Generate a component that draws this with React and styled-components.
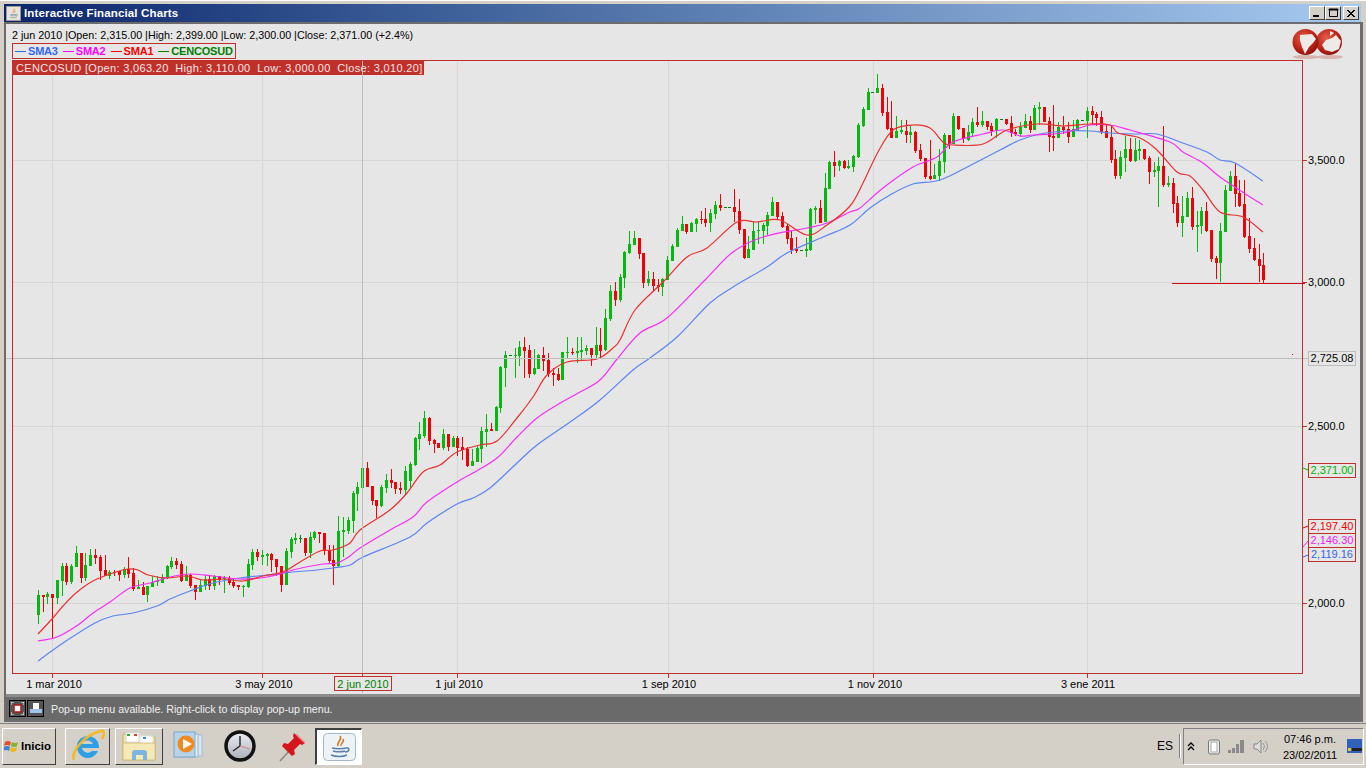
import React from 'react';
import styled, { createGlobalStyle } from 'styled-components';

const GlobalStyle = createGlobalStyle`
	html, body { margin: 0; padding: 0; background: #d4d0c8; overflow: hidden; }
	* { box-sizing: border-box; }
`;

const UI_FONT = '"Liberation Sans", Arial, sans-serif';

const Page = styled.div`
	width: 1366px;
	height: 768px;
	display: flex;
	flex-direction: column;
	background: #d4d0c8;
	font-family: ${UI_FONT};
	overflow: hidden;
`;

const Win = styled.div`
	height: 724px;
	padding: 3px 2px 1px 4px;
	display: flex;
	flex-direction: column;
	border-top: 1px solid #fff;
	border-bottom: 1px solid #808080;
`;

const TitleBar = styled.div`
	height: 18px;
	flex: none;
	margin-right: 3px;
	display: flex;
	align-items: center;
	padding: 0 2px;
	background: linear-gradient(90deg, #0a246a 0%, #3a5c96 30%, #a6caf0 100%);
`;

const TitleIcon = styled.div`
	width: 15px;
	height: 15px;
	background: #e8e4dc;
	border: 1px solid #9a9a9a;
	display: flex;
	align-items: center;
	justify-content: center;
`;

const TitleText = styled.span`
	margin-left: 3px;
	flex: 1;
	color: #fff;
	font-size: 11.5px;
	font-weight: 700;
	letter-spacing: .15px;
`;

const CtrlButtons = styled.div`
	display: flex;
`;

const CtrlButton = styled.div`
	width: 16px;
	height: 14px;
	margin-left: ${props => props.gap ? '2px' : '0'};
	background: #d4d0c8;
	border: 1px solid;
	border-color: #fff #404040 #404040 #fff;
	display: flex;
	align-items: center;
	justify-content: center;
`;

const Panel = styled.div`
	flex: 1;
	margin-right: 1px;
	border: 2px solid #6c6c6c;
	border-right-width: 3px;
	background: #e6e6e6;
	display: flex;
	flex-direction: column;
	position: relative;
	min-height: 0;
`;

const InfoLine = styled.div`
	height: 19px;
	padding: 4px 0 0 6px;
	font-size: 10.75px;
	line-height: 14px;
	color: #000;
	white-space: pre;
`;

const Legend = styled.div`
	align-self: flex-start;
	height: 16px;
	margin-left: 6px;
	padding: 0 2px;
	border: 1px solid #c0302a;
	display: flex;
	align-items: center;
	gap: 5px;
`;

const LegendItem = styled.span`
	display: flex;
	align-items: center;
	gap: 2px;
	color: ${props => props.color};
	font-size: 11px;
	font-weight: 700;
	letter-spacing: -.2px;

	&::before {
		content: '';
		width: 11px;
		height: 1px;
		background: ${props => props.color};
	}
`;

const ChartArea = styled.div`
	position: relative;
	height: 634px;
	margin-top: 1px;
`;

const Banner = styled.div`
	position: absolute;
	left: 6px;
	top: 1px;
	width: 412px;
	height: 14px;
	padding-left: 4px;
	background: #c0302a;
	color: #f4e4e2;
	font-size: 11px;
	line-height: 14px;
	letter-spacing: .32px;
	white-space: pre;
`;

const ChartSvg = styled.svg`
	position: relative;
	display: block;
`;

const Logo = styled.svg`
	position: absolute;
	right: 17px;
	top: 5px;
`;

const StatusBar = styled.div`
	flex: none;
	height: 26px;
	border-top: 3px solid #8c8c8c;
	background: #6a6a6a;
	display: flex;
	align-items: center;
	padding-left: 3px;
	gap: 1px;
`;

const StatusIcon = styled.div`
	width: 17px;
	height: 17px;
	background: #555;
	border: 1px solid #000;
	display: flex;
	align-items: center;
	justify-content: center;
`;

const StatusText = styled.span`
	margin-left: 6px;
	color: #f0f0f0;
	font-size: 10.7px;
`;

const Taskbar = styled.div`
	flex: 1;
	display: flex;
	align-items: center;
	padding: 0 2px;
	background: #d4d0c8;
`;

const StartButton = styled.div`
	width: 54px;
	height: 37px;
	display: flex;
	align-items: center;
	gap: 1px;
	padding-left: 1px;
	border: 1px solid;
	border-color: #fff #404040 #404040 #fff;
	font-size: 11.5px;
	font-weight: 700;
	color: #000;
`;

const TaskIcon = styled.div`
	width: ${props => props.w}px;
	height: 37px;
	margin-left: ${props => props.ml}px;
	display: flex;
	align-items: center;
	justify-content: center;
	border: ${props => props.flat ? '0' : '1px solid'};
	border-color: #fff #404040 #404040 #fff;
`;

const ActiveTask = styled(TaskIcon)`
	background: #fff;
	border-color: #404040 #fff #fff #404040;
	border-width: 2px 1px 1px 2px;
`;

const Spring = styled.div`
	flex: 1;
`;

const Lang = styled.span`
	font-size: 12px;
	color: #000;
	padding-right: 6px;
	border-right: 1px solid #808080;
	height: 24px;
	line-height: 24px;
	box-shadow: 1px 0 0 #fff;
`;

const Tray = styled.div`
	width: 181px;
	height: 37px;
	margin-left: 3px;
	border: 1px solid;
	border-color: #808080 #fff #fff #808080;
	display: flex;
	align-items: center;
	padding-left: 3px;
`;

const TrayIcons = styled.div`
	display: flex;
	align-items: center;
	gap: 8px;
	width: 93px;

	> svg:first-child {
		margin-right: 4px;
	}
`;

const Clock = styled.div`
	width: 60px;
	padding-top: 1px;
	font-size: 11px;
	line-height: 16px;
	text-align: center;
	color: #000;
`;

const DesktopIcon = styled.svg`
	margin-left: 7px;
`;

const GREEN = '#05b80f';
const DOJI = '#0a7a0a';
const RED = '#ee0008';
const BLUE = '#5a84f5';
const MAGENTA = '#f72cf7';
const LINE_RED = '#ea2f2f';
const FRAME = '#c0302a';

// candle rows are read off the chart at 3x: x, high, bodyTop, bodyBottom, low, kind (1 up, 0 down, 2 doji)
const sections = [
	{ ox: 0, oy: 520, rows: [
		[115,210,225,285,312,1],[130,225,225,231,275,0],[142,216,222,231,252,1],[157,222,222,234,357,0],[172,180,180,234,252,1],
		[187,128,138,183,228,1],[199,128,138,186,195,0],[214,132,138,186,192,1],[229,78,99,141,141,1],[244,99,99,174,189,0],
		[256,100,135,174,183,1],[271,87,105,138,138,1],[286,87,105,114,132,0],[301,105,111,153,180,0],[316,105,150,168,168,0],
		[328,150,156,168,177,1],[343,150,156,159,168,0],[358,153,153,165,183,0],[373,141,147,165,174,1],[385,111,147,162,174,0],
		[400,144,159,207,213,0],[415,180,201,207,207,1],[430,186,201,225,225,0],[442,198,198,225,246,1],[457,168,186,201,201,1],
		[472,168,183,186,198,1],[487,162,171,189,189,1],[502,135,138,174,177,1],[514,111,123,141,147,1],[529,114,123,135,147,0],
		[544,123,132,183,186,0],[559,138,165,183,183,1],[571,162,165,198,204,0],[586,195,195,216,240,0],[601,180,195,216,216,1],
		[616,165,177,198,210,1],[628,165,177,198,210,0],[643,165,168,198,210,1],[658,168,168,180,195,0],[673,168,174,177,219,1],
		[688,168,174,189,195,0],[700,177,186,198,204,0],[715,195,195,201,210,0],[730,195,198,201,231,1],[745,117,132,201,204,1],
		[757,87,96,135,150,1],[772,87,96,111,123,0],[787,90,105,111,135,1],[802,99,102,108,138,1],[814,99,102,120,156,0],
		[829,117,117,141,168,0],[844,138,138,195,216,0],[859,84,93,195,195,1],[874,51,57,96,114,1],[886,39,54,60,72,1],
		[901,45,54,57,69,2],[916,54,54,99,108,0],[931,36,51,99,114,1],[943,33,36,54,60,1],[958,36,36,42,69,0],
		[973,39,39,93,105,0],[988,75,90,123,132,0],[1000,75,120,138,195,0],[1015,-12,33,138,141,1],
	] },
	{ ox: 340, oy: 330, rows: [
		[10,560,600,606,680,1],[25,560,570,603,612,1],[40,483,489,573,609,1],[52,456,471,492,543,1],[67,414,414,474,474,1],
		[82,396,414,471,471,0],[97,468,468,513,525,0],[109,510,510,528,564,0],[124,465,471,528,531,1],[139,432,450,474,489,1],
		[154,417,450,459,474,0],[166,456,456,477,492,0],[181,456,474,480,492,0],[196,408,423,480,495,1],[211,396,402,453,474,1],
		[226,320,323,405,408,1],[238,276,312,327,360,1],[253,243,264,318,324,1],[268,261,264,333,345,0],[283,327,330,342,369,0],
		[295,339,339,354,354,0],[310,297,312,354,360,1],[325,312,312,351,363,0],[340,318,324,351,351,1],[352,318,324,354,378,0],
		[367,321,351,360,390,0],[382,351,357,408,411,0],[397,357,393,408,408,1],[412,348,354,396,396,1],[424,291,303,357,399,1],
		[439,252,297,306,351,1],[454,279,297,303,303,0],[469,228,231,303,303,1],[481,108,111,234,249,1],[496,63,75,114,171,1],
		[511,75,75,78,78,2],[526,54,75,78,144,1],[538,33,51,78,108,1],[553,21,51,63,144,0],[568,45,60,132,144,0],
		[583,57,114,132,135,1],[595,72,75,117,117,1],[610,51,75,93,123,0],[625,69,90,132,141,0],[640,114,129,135,168,0],
		[655,114,132,150,153,0],[667,66,66,150,150,1],[682,21,66,69,84,1],[697,54,66,69,75,0],[712,21,63,69,99,1],
		[724,21,60,66,90,1],[739,45,54,63,75,1],[754,54,54,75,108,0],[769,-9,45,75,84,1],[781,-6,45,63,84,0],
	] },
	{ ox: 600, oy: 120, rows: [
		[16,567,594,690,693,1],[31,495,513,597,603,1],[46,486,513,540,558,0],[61,462,471,540,546,1],[73,393,396,474,504,1],
		[88,333,372,399,402,1],[103,333,354,375,375,1],[118,354,354,402,417,0],[130,399,399,489,504,0],[145,453,477,489,498,1],
		[160,456,477,498,516,0],[175,477,495,501,516,0],[187,474,477,501,528,1],[202,408,420,480,480,1],[217,372,378,423,423,1],
		[232,324,330,381,381,1],[247,288,312,333,333,1],[259,312,312,336,342,0],[274,306,309,336,336,1],[289,294,297,312,336,1],
		[304,273,297,300,312,0],[316,264,297,309,321,0],[331,267,279,309,336,1],[346,243,255,282,297,1],[361,222,255,264,273,0],
		[376,261,261,264,264,2],[388,261,261,264,264,2],[403,207,261,276,306,0],[418,237,273,330,342,0],[433,327,327,414,417,0],
		[445,348,387,414,414,1],[460,306,333,390,390,1],[475,303,330,333,372,1],[490,309,315,333,372,1],[502,276,285,318,345,1],
		[517,231,246,288,288,1],[532,246,246,291,297,0],[547,276,288,321,324,0],[562,312,318,357,372,0],[574,333,354,390,402,0],
		[589,351,387,393,399,0],[604,390,390,393,393,2],[619,354,387,393,411,1],[631,264,267,390,393,1],[646,258,264,270,312,1],
		[661,240,264,309,309,0],[676,159,204,306,306,1],[688,123,126,207,207,1],[703,93,126,138,171,0],[718,120,123,138,153,1],
		[733,120,123,144,147,0],[745,120,138,144,147,1],
	] },
	{ ox: 850, oy: 65, rows: [
		[10,270,273,306,321,1],[25,174,180,276,279,1],[40,126,132,183,186,1],[55,69,81,135,135,1],[67,81,81,84,84,2],
		[82,27,69,84,84,1],[97,57,69,144,153,0],[112,96,141,192,195,0],[124,108,189,219,219,0],[139,153,198,219,219,1],
		[154,165,195,201,207,1],[169,165,198,210,234,0],[181,183,201,210,234,1],[196,198,201,258,264,0],[211,237,255,282,288,0],
		[226,279,279,336,342,0],[241,225,333,342,345,0],[253,297,330,342,342,1],[268,252,288,333,348,1],[283,204,210,291,324,1],
		[298,210,210,237,252,0],[310,144,153,237,237,1],[325,153,153,192,195,0],[340,189,189,222,234,0],[355,180,201,225,228,1],
		[367,159,171,204,216,1],[382,126,171,180,186,0],[397,138,168,180,186,1],[412,168,168,186,195,0],[424,174,183,198,213,0],
		[439,159,162,198,219,1],[454,162,162,165,165,2],[469,162,162,177,180,0],[484,153,174,204,216,0],[496,192,201,207,213,0],
		[511,171,186,207,216,1],[526,147,168,189,189,1],[541,153,168,195,204,0],[553,120,129,195,195,1],[568,111,126,132,180,1],
		[583,126,126,171,171,0],[598,156,168,216,261,0],[610,120,213,219,258,0],[625,171,186,219,219,1],[640,153,186,195,207,0],
		[655,171,192,216,234,0],[670,165,192,216,216,1],[682,162,165,198,198,1],[697,165,165,168,168,2],[712,126,138,168,219,1],
	] },
	{ ox: 1090, oy: 100, rows: [
		[7,18,33,45,75,0],[19,36,42,54,78,0],[34,33,51,96,102,0],[49,75,93,114,114,0],[64,78,111,180,189,0],
		[76,150,177,228,237,0],[91,153,171,228,237,1],[106,108,147,174,216,1],[121,114,147,183,186,0],[136,114,150,183,186,1],
		[148,120,147,153,180,1],[163,147,147,177,180,0],[178,168,174,216,252,0],[193,186,210,216,231,1],[205,171,198,213,321,1],
		[220,78,198,255,261,0],[235,228,249,255,261,1],[250,234,249,312,339,0],[262,288,309,369,381,0],[277,288,348,369,411,1],
		[292,276,294,351,351,1],[307,261,294,381,390,0],[322,333,375,381,456,1],[334,321,333,378,402,1],[349,306,333,393,396,0],
		[364,390,390,477,486,0],[379,468,474,489,537,0],[391,369,393,489,546,1],[406,255,270,396,396,1],[421,213,228,273,273,1],
		[436,189,228,282,321,0],[448,240,279,318,321,0],[463,240,312,411,414,0],[478,354,408,447,459,0],[493,414,444,480,483,0],
		[508,432,477,498,546,0],[520,459,495,540,549,0],
	] },
];

const candles = sections.flatMap(({ ox, oy, rows }) => rows.map(([x, hi, top, bot, lo, kind]) => ({
	x: ox + Math.floor(x / 3),
	hi: Math.round(oy + hi / 3),
	top: Math.round(oy + top / 3),
	bot: Math.round(oy + bot / 3),
	lo: Math.round(oy + lo / 3),
	kind,
})));

const sma1 = [[38,634],[52,619],[63,606],[76,593],[93,581],[113,573],[128,569],[138,570],[148,575],[167,578],[187,576],[203,580],[223,579],[243,581],[263,576],[283,572],[300,562],[320,551],[333,550],[350,543],[360,530],[390,510],[407,493],[423,472],[440,465],[457,452],[480,445],[497,441],[517,418],[533,397],[547,375],[567,362],[597,359],[613,348],[620,340],[635,310],[663,282],[687,257],[707,248],[737,222],[757,222],[780,220],[807,235],[827,225],[850,206],[863,183],[878,152],[893,130],[913,125],[930,128],[943,142],[953,145],[983,144],[1007,130],[1037,124],[1063,126],[1090,124],[1110,125],[1118,133],[1140,138],[1157,150],[1177,172],[1190,176],[1203,190],[1220,212],[1243,217],[1263,232]];
const sma2 = [[38,641],[57,637],[78,625],[93,613],[110,602],[130,588],[150,583],[170,577],[190,574],[213,576],[240,579],[267,577],[297,569],[323,564],[337,563],[350,556],[360,548],[390,530],[413,517],[427,502],[457,482],[473,473],[497,458],[517,437],[537,418],[557,405],[580,392],[600,380],[618,358],[640,333],[667,318],[705,280],[733,252],[763,237],[807,228],[827,223],[850,212],[860,208],[883,188],[913,167],[937,157],[953,142],[983,134],[1003,130],[1020,136],[1033,135],[1063,133],[1090,125],[1110,125],[1130,130],[1170,142],[1183,152],[1203,163],[1220,177],[1247,195],[1263,205]];
const sma3 = [[38,661],[63,643],[95,623],[113,616],[133,613],[157,606],[170,599],[190,591],[213,583],[240,578],[267,575],[293,572],[317,570],[333,568],[350,565],[363,557],[410,537],[427,523],[457,504],[473,498],[490,488],[517,463],[537,445],[573,420],[600,400],[633,370],[650,358],[677,337],[710,303],[733,287],[767,267],[787,253],[823,237],[850,225],[870,208],[890,195],[913,184],[940,180],[973,164],[1000,150],[1020,140],[1040,134],[1067,131],[1090,131],[1110,133],[1133,134],[1157,134],[1180,142],[1207,152],[1220,160],[1235,163],[1263,181]];

const smooth = (pts) => {
	let d = `M${pts[0][0]} ${pts[0][1]}`;
	for (let i = 0; i < pts.length - 1; i++) {
		const p0 = pts[i - 1] || pts[i];
		const p1 = pts[i];
		const p2 = pts[i + 1];
		const p3 = pts[i + 2] || p2;
		const c1x = p1[0] + (p2[0] - p0[0]) / 6;
		const c1y = p1[1] + (p2[1] - p0[1]) / 6;
		const c2x = p2[0] - (p3[0] - p1[0]) / 6;
		const c2y = p2[1] - (p3[1] - p1[1]) / 6;
		d += `C${c1x.toFixed(1)} ${c1y.toFixed(1)} ${c2x.toFixed(1)} ${c2y.toFixed(1)} ${p2[0]} ${p2[1]}`;
	}
	return d;
};

const vGrid = [52, 262, 457, 668, 873, 1087];
const hGrid = [160, 282, 426, 603];
const priceLabels = [[160, '3,500.0'], [282, '3,000.0'], [426, '2,500.0'], [603, '2,000.0']];
const dateLabels = [[54, '1 mar 2010'], [264, '3 may 2010'], [459, '1 jul 2010'], [669, '1 sep 2010'], [875, '1 nov 2010'], [1088, '3 ene 2011']];
const tags = [
	{ y: 463, text: '2,371.00', color: '#00b400', from: 468, to: 470 },
	{ y: 519, text: '2,197.40', color: '#ee0000', from: 528, to: 526 },
	{ y: 533, text: '2,146.30', color: '#f020f0', from: 547, to: 541 },
	{ y: 547, text: '2,119.16', color: '#3366ee', from: 557, to: 555 },
];

const Candle = ({ x, hi, top, bot, lo, kind }) => {
	const color = kind === 2 ? DOJI : kind === 1 ? GREEN : RED;
	return (
		<g fill={color}>
			<rect x={x} y={hi} width="1" height={Math.max(lo - hi, 1)} />
			<rect x={x - 1} y={top} width="3" height={Math.max(bot - top, 1)} />
		</g>
	);
};

const Chart = () => (
	<ChartSvg width="1354" height="634" viewBox="6 60 1354 634" fontFamily={UI_FONT} fontSize="11">
		<g stroke="#d6d6d6" shapeRendering="crispEdges">
			{vGrid.map((x) => <line key={x} x1={x + .5} x2={x + .5} y1={x < 424 ? 75 : 61} y2="673" />)}
			{hGrid.map((y) => <line key={y} x1="13" x2="1303" y1={y + .5} y2={y + .5} />)}
		</g>
		<g shapeRendering="crispEdges">
			{candles.map((c, i) => <Candle key={i} {...c} />)}
		</g>
		<g fill="none" strokeWidth="1.2">
			<path d={smooth(sma3)} stroke={BLUE} />
			<path d={smooth(sma2)} stroke={MAGENTA} />
			<path d={smooth(sma1)} stroke={LINE_RED} />
		</g>
		<g shapeRendering="crispEdges">
			<line x1="362.5" x2="362.5" y1="60" y2="693" stroke="#bdbdbd" />
			<line x1="6" x2="1308" y1="358.5" y2="358.5" stroke="#bdbdbd" />
			<rect x="12.5" y="60.5" width="1290" height="613" fill="none" stroke={FRAME} />
			<line x1="1172" x2="1305" y1="283.5" y2="283.5" stroke="#d01010" />
			<rect x="1292" y="354" width="1" height="1" fill="#ee0000" />
			{priceLabels.map(([y]) => <line key={y} x1="1303" x2="1307" y1={y + .5} y2={y + .5} stroke={FRAME} />)}
			{[...vGrid, 362].map((x) => <line key={x} x1={x + .5} x2={x + .5} y1="673" y2="678" stroke={FRAME} />)}
			<rect x="334.5" y="676.5" width="57" height="14" fill="#e6e6e6" stroke={FRAME} />
		</g>
		{priceLabels.map(([y, text]) => <text key={y} x="1308" y={y + 4} fill="#000">{text}</text>)}
		{dateLabels.map(([x, text]) => <text key={x} x={x} y="688" textAnchor="middle" fill="#000">{text}</text>)}
		<text x="363" y="688" textAnchor="middle" fill="#008000">2 jun 2010</text>
		<rect x="1308.5" y="351.5" width="47" height="14" fill="#e6e6e6" stroke="#bdbdbd" shapeRendering="crispEdges" />
		<text x="1332" y="362" textAnchor="middle" fill="#000">2,725.08</text>
		{tags.map(({ y, text, color, from, to }) => (
			<g key={y}>
				<path d={`M1303 ${from}L1308 ${to}`} stroke={color} fill="none" />
				<rect x="1308.5" y={y + .5} width="47" height="14" fill="#e6e6e6" stroke={FRAME} shapeRendering="crispEdges" />
				<text x="1332" y={y + 11} textAnchor="middle" fill={color}>{text}</text>
			</g>
		))}
	</ChartSvg>
);

const GlobesLogo = () => (
	<Logo width="51" height="32" viewBox="0 0 51 32">
		<defs>
			<radialGradient id="globe" cx=".4" cy=".35" r=".75">
				<stop offset="0" stopColor="#e2604a" />
				<stop offset=".6" stopColor="#bb2114" />
				<stop offset="1" stopColor="#7d0f08" />
			</radialGradient>
		</defs>
		<ellipse cx="14" cy="28" rx="13" ry="2" fill="#d8b4ae" />
		<ellipse cx="38" cy="28" rx="13" ry="2" fill="#d8b4ae" />
		<circle cx="37" cy="13" r="13" fill="url(#globe)" />
		<circle cx="13.5" cy="13" r="13" fill="url(#globe)" />
		<path d="M8 6l12-1 4 5-3 4-4 4-4 7-3-7-2-7z" fill="#eeeae8" />
		<path d="M30 16l4-5 6-2 4-3 5 6-2 8-7 3-7-2z" fill="#eeeae8" />
		<path d="M38 2l4 2-4 3z" fill="#eeeae8" />
	</Logo>
);

const WindowsFlag = () => (
	<svg width="16" height="15" viewBox="0 0 16 15">
		<path d="M1 3q3-2 6 0l-1 4q-3-2-6 0z" fill="#e2512a" />
		<path d="M8 3q3 2 6 0l-1 4q-3 2-6 0z" fill="#7fb432" />
		<path d="M0 8q3-2 6 0l-1 4q-3-2-6 0z" fill="#3d82d8" />
		<path d="M7 8q3 2 6 0l-1 4q-3 2-6 0z" fill="#f1b61f" />
	</svg>
);

const IeIcon = () => (
	<svg width="34" height="34" viewBox="0 0 34 34">
		<path d="M17 7a11 11 0 1 0 10 15h-6a6 6 0 0 1-10-3h17v-2a11 11 0 0 0-11-10zm-6 8a6 6 0 0 1 11 0z" fill="#2e9fe6" />
		<path d="M3 31C-1 25 12 6 30 2c3-1 4 3 1 8" fill="none" stroke="#f5b81e" strokeWidth="2.5" />
	</svg>
);

const FolderIcon = () => (
	<svg width="34" height="30" viewBox="0 0 34 30">
		<path d="M1 3h11l2 3h19v23H1z" fill="#efe2a6" stroke="#c4ac66" />
		<rect x="4" y="2" width="13" height="9" fill="#fff" stroke="#ddd" />
		<rect x="18" y="5" width="13" height="8" fill="#fff" stroke="#ddd" />
		<rect x="5" y="3" width="3" height="2" fill="#2fae2f" />
		<rect x="12" y="3" width="3" height="2" fill="#d8402a" />
		<rect x="21" y="6" width="3" height="2" fill="#2a8fe0" />
		<path d="M1 12h32v17H1z" fill="#f6e9b4" stroke="#d4bf7c" />
		<path d="M10 29v-7q0-3 3-3h9q3 0 3 3v7h-4v-5h-7v5z" fill="#7cb6de" />
	</svg>
);

const MediaIcon = () => (
	<svg width="34" height="30" viewBox="0 0 34 30">
		<rect x="10" y="4" width="19" height="21" fill="#dbe6f0" stroke="#9dbcd8" />
		<rect x="6" y="3" width="19" height="23" fill="#e6eef6" stroke="#8fb2d2" />
		<rect x="1" y="1" width="21" height="25" fill="#b6d3ea" stroke="#7aa8cc" />
		<circle cx="13" cy="13" r="8.5" fill="#ef8a1e" />
		<path d="M10 8l9 5-9 5z" fill="#fff" />
	</svg>
);

const ClockIcon = () => (
	<svg width="32" height="32" viewBox="0 0 32 32">
		<defs>
			<linearGradient id="clockFace" x1="0" y1="0" x2="0" y2="1">
				<stop offset="0" stopColor="#f0f0f4" />
				<stop offset="1" stopColor="#a9adb6" />
			</linearGradient>
		</defs>
		<circle cx="16" cy="16" r="14" fill="url(#clockFace)" stroke="#111" strokeWidth="3.5" />
		<path d="M16 16V6M16 16L9 21" stroke="#222" strokeWidth="1.4" fill="none" />
		<path d="M16 16L26 19" stroke="#c88" strokeWidth="1" fill="none" />
	</svg>
);

const PinIcon = () => (
	<svg width="30" height="32" viewBox="0 0 30 32">
		<path d="M2 31l10-11" stroke="#888" strokeWidth="1.6" />
		<path d="M16 3l11 10-3 2-2-1-6 6 1 4-3 2-10-10 2-3 4 1 6-6-1-2z" fill="#d5141c" />
		<path d="M18 4l8 8" stroke="#f28a8a" strokeWidth="1.6" />
	</svg>
);

const JavaSteam = ({ size = 32 }) => (
	<svg width={size} height={size} viewBox="0 0 32 32">
		<path d="M17 4c3 4-4 6-2 11M20 8c2 3-3 4-2 7" fill="none" stroke="#d07b2c" strokeWidth="1.6" />
		<path d="M8 18c4 1 12 1 15 0M9 21c4 1 10 1 13 0M7 25c5 2 13 2 17 0M23 18c4-1 4 4-1 4" fill="none" stroke="#5c7fa6" strokeWidth="1.5" />
	</svg>
);

const JavaTile = () => (
	<svg width="33" height="28" viewBox="0 0 33 28">
		<rect x=".5" y=".5" width="32" height="27" rx="4" fill="#edf2f7" stroke="#a3b8cc" />
		<path d="M17 3c3 4-4 6-2 10M20 6c2 3-3 4-2 7" fill="none" stroke="#d07b2c" strokeWidth="1.6" />
		<path d="M9 15c4 1 11 1 14 0M10 18c4 1 9 1 12 0M8 22c5 2 12 2 16 0M23 15c4-1 4 4-1 4" fill="none" stroke="#5c7fa6" strokeWidth="1.5" />
	</svg>
);

const App = () => (
	<Page>
		<GlobalStyle />
		<Win>
			<TitleBar>
				<TitleIcon><JavaSteam size={13} /></TitleIcon>
				<TitleText>Interactive Financial Charts</TitleText>
				<CtrlButtons>
					<CtrlButton><svg width="10" height="10"><rect x="1" y="7" width="6" height="2" fill="#000" /></svg></CtrlButton>
					<CtrlButton><svg width="11" height="10"><path d="M1.5 1.5h8v7h-8zM1 1h9v1H1z" fill="none" stroke="#000" /></svg></CtrlButton>
					<CtrlButton gap><svg width="10" height="9"><path d="M1 1l7 7M8 1L1 8M2 1l7 7M9 1L2 8" stroke="#000" /></svg></CtrlButton>
				</CtrlButtons>
			</TitleBar>
			<Panel>
				<InfoLine>2 jun 2010 |Open: 2,315.00 |High: 2,399.00 |Low: 2,300.00 |Close: 2,371.00 (+2.4%)</InfoLine>
				<Legend>
					<LegendItem color="#3366ff">SMA3</LegendItem>
					<LegendItem color="#ff00ff">SMA2</LegendItem>
					<LegendItem color="#ff0000">SMA1</LegendItem>
					<LegendItem color="#008000">CENCOSUD</LegendItem>
				</Legend>
				<GlobesLogo />
				<ChartArea>
					<Banner>CENCOSUD [Open: 3,063.20  High: 3,110.00  Low: 3,000.00  Close: 3,010.20] (-1.7%)</Banner>
					<Chart />
				</ChartArea>
				<StatusBar>
					<StatusIcon>
						<svg width="13" height="13"><path d="M0 3V0h3M10 0h3v3M13 10v3h-3M3 13H0v-3" stroke="#fff" fill="none" /><rect x="3" y="3" width="7" height="7" fill="#fff" stroke="#b01818" strokeWidth="1.5" /></svg>
					</StatusIcon>
					<StatusIcon>
						<svg width="13" height="13"><rect x="4" y="1" width="6" height="6" fill="#fff" /><rect x="1" y="7" width="12" height="4" fill="#9cc4ec" /></svg>
					</StatusIcon>
					<StatusText>Pop-up menu available. Right-click to display pop-up menu.</StatusText>
				</StatusBar>
			</Panel>
		</Win>
		<Taskbar>
			<StartButton><WindowsFlag />Inicio</StartButton>
			<TaskIcon w={45} ml={9}><IeIcon /></TaskIcon>
			<TaskIcon w={48} ml={5}><FolderIcon /></TaskIcon>
			<TaskIcon flat w={44} ml={5}><MediaIcon /></TaskIcon>
			<TaskIcon flat w={44} ml={6}><ClockIcon /></TaskIcon>
			<TaskIcon flat w={44} ml={9}><PinIcon /></TaskIcon>
			<ActiveTask w={47} ml={0}><JavaTile /></ActiveTask>
			<Spring />
			<Lang>ES</Lang>
			<Tray>
				<TrayIcons>
					<svg width="9" height="11"><path d="M1 5l3-3 3 3M1 9l3-3 3 3" stroke="#000" fill="none" strokeWidth="1.3" /></svg>
					<svg width="12" height="17"><rect x=".5" y="2" width="11" height="14" rx="2" fill="#eee" stroke="#777" /><rect x="3" y="4" width="6" height="10" fill="#fff" stroke="#aaa" /></svg>
					<svg width="17" height="14"><path d="M0 14h3v-3H0zM4 14h3V9H4zM8 14h3V5H8zM12 14h4V1h-4z" fill="#8a8a8a" /></svg>
					<svg width="17" height="15"><path d="M1 5h3l4-4v13l-4-4H1z" fill="#ddd" stroke="#888" /><path d="M10 4q3 3 0 7M12 2q5 5 0 11" stroke="#999" fill="none" /></svg>
				</TrayIcons>
				<Clock>07:46 p.m.<br />23/02/2011</Clock>
				<DesktopIcon width="15" height="14"><rect width="15" height="14" fill="#2f62b8" /><rect x="5" y="9" width="10" height="3" fill="#222" /><rect x="1" y="9" width="3" height="3" fill="#e8c83a" /></DesktopIcon>
			</Tray>
		</Taskbar>
	</Page>
);

export default App;
